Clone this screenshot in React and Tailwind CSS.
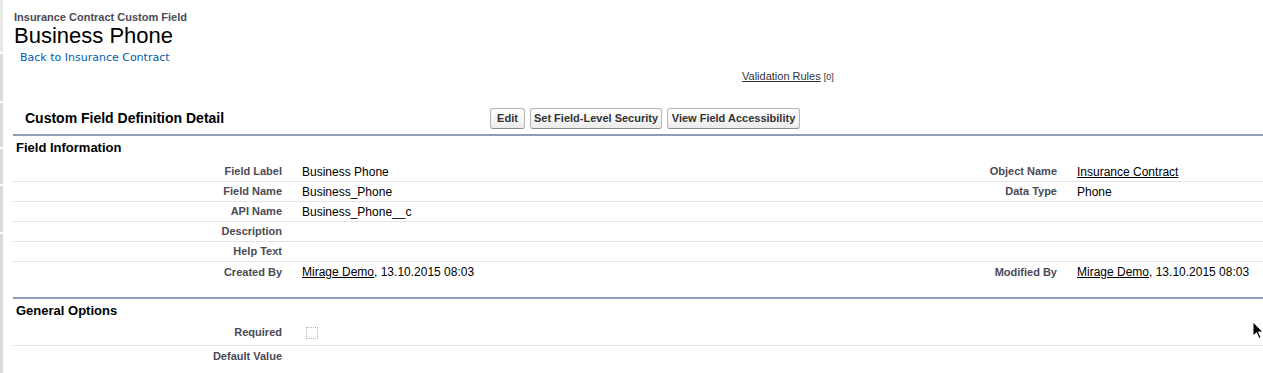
import React from "react";

const LABEL = "text-right pr-[10px] text-[11px] font-bold text-[#4a4a56] leading-[13px]";
const VALUE = "pl-[10px] text-[12px] text-black leading-[14px]";

const Link = ({ children }) => <span className="underline text-black">{children}</span>;

const fieldRows = [
  ["Field Label", "Business Phone", "Object Name", <Link>Insurance Contract</Link>],
  ["Field Name", "Business_Phone", "Data Type", "Phone"],
  ["API Name", "Business_Phone__c", "", ""],
  ["Description", "", "", ""],
  ["Help Text", "", "", ""],
  [
    "Created By",
    <>
      <Link>Mirage Demo</Link>, 13.10.2015 08:03
    </>,
    "Modified By",
    <>
      <Link>Mirage Demo</Link>, 13.10.2015 08:03
    </>,
  ],
];

// one row of the detail list, label / value / label / value
const DetailRow = ({ row, last }) => (
  <div
    className={`grid grid-cols-[279px_496px_279px_1fr] items-center h-[20px] ${last ? "" : "border-b border-[#e3e3e3]"}`}
  >
    <div className={LABEL}>{row[0]}</div>
    <div className={VALUE}>{row[1]}</div>
    <div className={LABEL}>{row[2]}</div>
    <div className={VALUE}>{row[3]}</div>
  </div>
);

const Button = ({ children, className = "" }) => (
  <button
    className={`h-[21px] rounded-[3px] border border-[#b5b5b5] border-b-[#8f8f8f] bg-gradient-to-b from-white to-[#ececec] text-[11px] font-bold text-[#333] leading-[13px] ${className}`}
  >
    {children}
  </button>
);

const SideStrip = () => (
  <div className="w-[3px] shrink-0 flex flex-col gap-[2px]">
    <div className="h-[52px] bg-[#e9e9e9]" />
    <div className="h-[48px] bg-[#dadada]" />
    <div className="h-[44px] bg-[#dadada]" />
    <div className="h-[35px] bg-[#dadada]" />
    <div className="h-[46px] bg-[#dadada]" />
    <div className="h-[140px] bg-[#dadada]" />
  </div>
);

const Cursor = () => (
  <svg
    className="absolute left-[1252px] top-[321px]"
    width="12"
    height="19"
    viewBox="0 0 12 19"
  >
    <path
      d="M1 1 L1 15 L4.5 11.8 L7 17.5 L9 16.6 L6.6 11 L11 11 Z"
      fill="#000"
      stroke="#fff"
      strokeWidth="1"
      strokeLinejoin="round"
    />
  </svg>
);

export default function App() {
  return (
    <div
      className="relative flex w-[1263px] h-[373px] overflow-hidden bg-white"
      style={{ fontFamily: "Arial, 'Liberation Sans', Helvetica, sans-serif" }}
    >
      <SideStrip />
      <div className="flex-1 pl-[10px]">
        {/* Page title */}
        <div className="pt-[11px] pl-[1px] text-[11px] font-bold leading-[13px] text-[#4a4a56]">
          Insurance Contract Custom Field
        </div>
        <h1 className="pl-[1px] text-[22px] leading-[24px] text-black">Business Phone</h1>
        <div
          className="mt-[3px] pl-[7px] text-[11px] leading-[13px] text-[#015ba7]"
          style={{ fontFamily: "'DejaVu Sans', Verdana, sans-serif" }}
        >
          Back to Insurance Contract
        </div>

        <div className="mt-[6px] pl-[729px] text-[11px] leading-[13px] text-[#333]">
          <span className="underline">Validation Rules</span>{" "}
          <span className="text-[9px]">[0]</span>
        </div>

        {/* Block header */}
        <div className="mt-[18px] flex items-center h-[32px]">
          <div className="w-[477px] pl-[12px] text-[14px] font-bold text-black">
            Custom Field Definition Detail
          </div>
          <div className="flex gap-[5px]">
            <Button className="w-[35px]">Edit</Button>
            <Button className="w-[132px]">Set Field-Level Security</Button>
            <Button className="w-[133px]">View Field Accessibility</Button>
          </div>
        </div>

        {/* Field Information */}
        <div className="border-t-2 border-[#8e9dbe]">
          <div className="h-[26px] pt-[4px] pl-[3px] text-[13px] font-bold leading-[15px] text-black">
            Field Information
          </div>
          {fieldRows.map((row, i) => (
            <DetailRow key={row[0]} row={row} last={i === fieldRows.length - 1} />
          ))}
        </div>

        {/* General Options */}
        <div className="mt-[15px] border-t-2 border-[#8e9dbe]">
          <div className="h-[23px] pt-[4px] pl-[3px] text-[13px] font-bold leading-[15px] text-black">
            General Options
          </div>
          <div className="grid grid-cols-[279px_1fr] items-center h-[24px] pb-[2px] border-b border-[#e3e3e3]">
            <div className={LABEL}>Required</div>
            <div className="pl-[14px]">
              <div className="w-[12px] h-[12px] border border-dotted border-[#b8b8b8]" />
            </div>
          </div>
          <div className="grid grid-cols-[279px_1fr] items-center h-[20px]">
            <div className={LABEL}>Default Value</div>
            <div className={VALUE}></div>
          </div>
        </div>
      </div>
      <Cursor />
    </div>
  );
}
